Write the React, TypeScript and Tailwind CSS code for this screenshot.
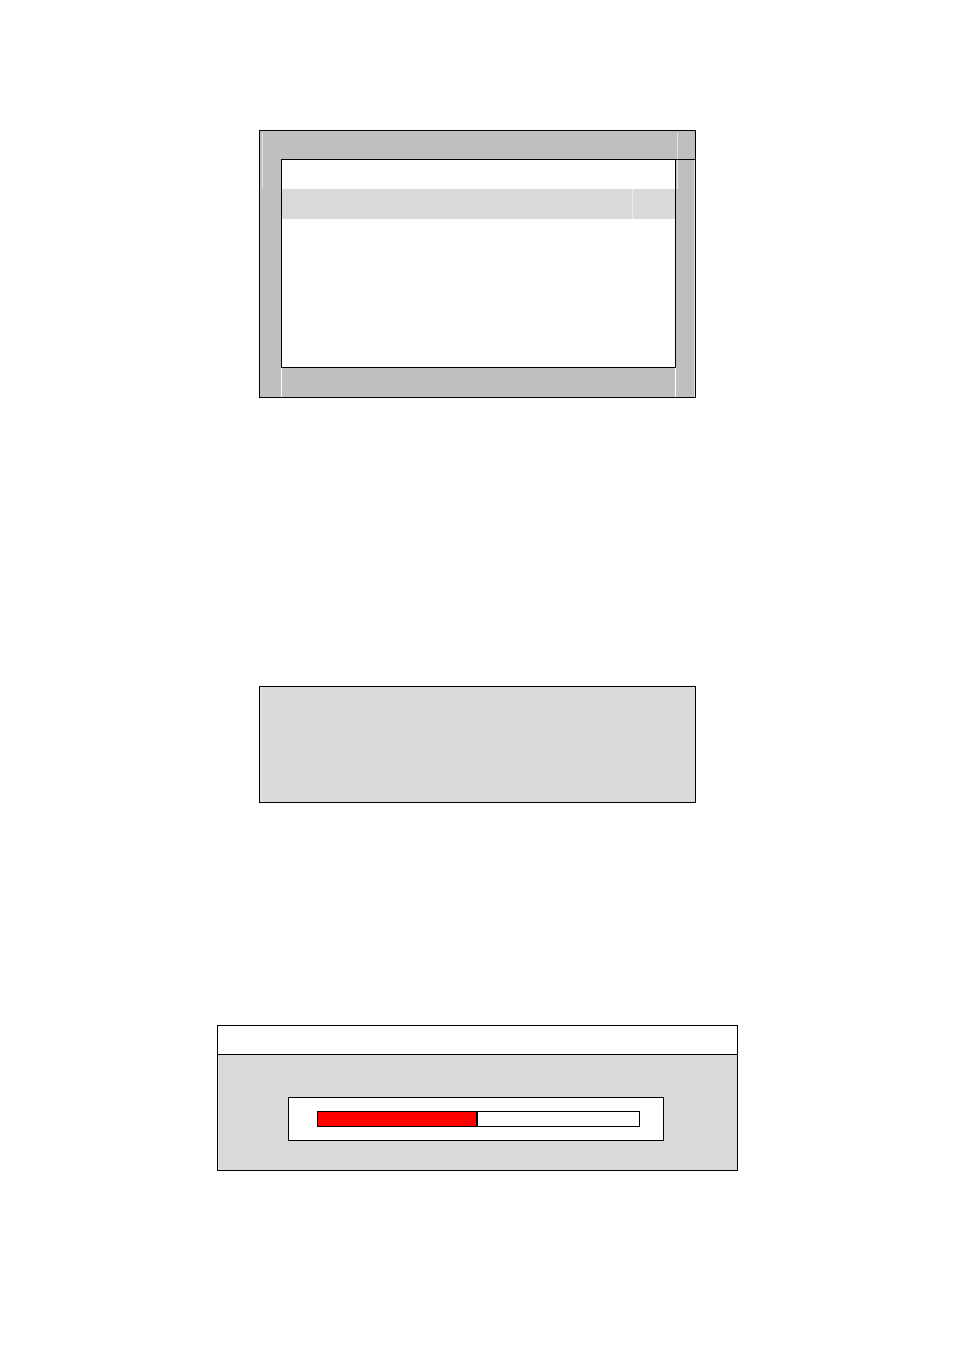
import React from "react";

export default function App() {
  return (
    <div className="w-[954px] h-[1351px] bg-white flex flex-col" style={{ fontFamily: '"Liberation Sans", Arial, sans-serif' }}>
      {/* Box 1: list window */}
      <div className="mt-[130px] ml-[259px] w-[437px] h-[268px] border border-black bg-[#bfbfbf] flex flex-col">
        <div className="h-[28px] flex shrink-0">
          <div className="ml-[2px] mt-[2px] w-[416px] h-[26px] border-x border-[#e4e4e4]" />
        </div>
        <div className="flex flex-1">
          <div className="w-[21px] shrink-0">
            <div className="ml-[2px] h-[30px] border-l border-[#e4e4e4]" />
          </div>
          <div className="w-[414px] flex flex-col border-t border-black">
            <div className="flex">
              <div className="w-[395px] h-[208px] bg-white border-x border-b border-black flex flex-col">
                <div className="h-[29px]" />
                <div className="h-[30px] bg-[#d9d9d9] flex">
                  <div className="w-[351px] h-full border-r border-[#ececec]" />
                </div>
              </div>
              <div className="w-[19px] flex flex-col border-r border-[#e4e4e4]">
                <div className="ml-[1px] h-[29px] border-l border-[#e4e4e4]" />
              </div>
            </div>
            <div className="flex flex-1">
              <div className="w-[395px] h-full border-x border-white" />
              <div className="w-[19px] h-full border-r border-[#e4e4e4]" />
            </div>
          </div>
        </div>
      </div>

      {/* Box 2: message panel */}
      <div className="mt-[288px] ml-[259px] w-[437px] h-[117px] border border-black bg-[#d9d9d9] flex">
        <div className="ml-[1px] h-full border-l border-[#e4e4e4]" />
      </div>

      {/* Box 3: progress dialog */}
      <div className="mt-[222px] ml-[217px] w-[521px] h-[146px] border border-black bg-[#d9d9d9] flex flex-col">
        <div className="h-[29px] bg-white border-b border-black shrink-0" />
        <div className="flex-1 flex flex-col border-l border-[#e4e4e4]">
          <div className="mt-[42px] ml-[69px] w-[376px] h-[44px] bg-white border border-black flex flex-col">
            <div className="mt-[13px] ml-[28px] w-[323px] h-[16px] border border-black bg-white flex">
              <div className="w-[158px] h-full bg-[#ff0000]" />
              <div className="w-[2px] h-full bg-black" />
            </div>
          </div>
        </div>
      </div>
    </div>
  );
}
